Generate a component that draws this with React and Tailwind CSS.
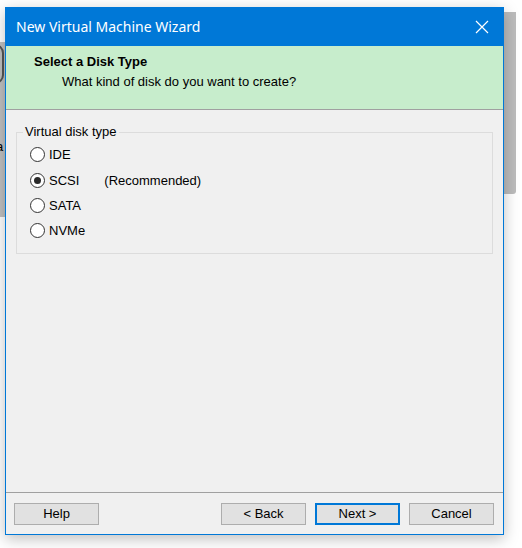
import React from "react";

function Radio({ checked }) {
  return (
    <span className="relative inline-block w-[15px] h-[15px] rounded-full border border-[#333] bg-white shrink-0">
      {checked && <span className="absolute left-[3px] top-[3px] w-[7px] h-[7px] rounded-full bg-[#2a2a2a]" />}
    </span>
  );
}

function Btn({ children, primary }) {
  return (
    <div
      className={
        "w-[85px] h-[22px] flex items-center justify-center bg-[#e1e1e1] text-[13px] text-black " +
        (primary ? "border-2 border-[#0078d7]" : "border border-[#adadad]")
      }
    >
      {children}
    </div>
  );
}

export default function App() {
  const font = { fontFamily: "'Liberation Sans', Arial, sans-serif" };
  return (
    <div className="relative w-[522px] h-[548px] bg-white overflow-hidden" style={font}>
      {/* background window hints */}
      <div className="absolute left-0 top-[42px] w-[6px] h-[175px] bg-[#c0c0c0]" />
      <div className="absolute left-[-14px] top-[44px] w-[18px] h-[40px] rounded-full border-2 border-[#555]" />
      <span className="absolute left-[-4px] top-[139px] text-[13px] text-black leading-[15px]">a</span>
      <div className="absolute left-[504px] top-[12px] w-[12px] h-[182px] bg-[#bcbcbc] rounded-br-[3px]" />
      {/* dialog */}
      <div className="absolute left-[5px] top-[7px] w-[499px] h-[528px] border border-[#0078d7] bg-[#f0f0f0] flex flex-col shadow-[0_4px_14px_rgba(0,0,0,0.25)]">
        <div className="h-[38px] bg-[#0078d7] flex items-center justify-between pl-[10px] pr-[14px] shrink-0">
          <span className="text-white text-[14px] mt-[-2px]" style={{ fontFamily: "'Segoe UI', 'Noto Sans', sans-serif" }}>
            New Virtual Machine Wizard
          </span>
          <svg width="14" height="14" viewBox="0 0 14 14">
            <path d="M1 1 L13 13 M13 1 L1 13" stroke="white" strokeWidth="1.2" />
          </svg>
        </div>
        <div className="h-[64px] bg-[#c7edcc] border-b border-[#a0a0a0] shrink-0 pl-[28px] pt-[8px]">
          <div className="text-[13px] font-bold text-black leading-[15px]">Select a Disk Type</div>
          <div className="text-[13px] text-black leading-[15px] mt-[5px] pl-[28px]">What kind of disk do you want to create?</div>
        </div>
        <div className="flex-1 px-[10px] pt-[22px]">
          <div className="relative border border-[#dcdcdc] h-[122px] pt-[14px] pl-[13px]">
            <span className="absolute left-[6px] top-[-9px] bg-[#f0f0f0] px-[2px] text-[13px] text-black leading-[15px]">
              Virtual disk type
            </span>
            <div className="flex flex-col">
              <div className="flex items-center h-[15px] gap-[4px] text-[13px] text-black">
                <Radio /> <span>IDE</span>
              </div>
              <div className="flex items-center h-[15px] gap-[4px] text-[13px] text-black mt-[11px]">
                <Radio checked /> <span>SCSI</span>
                <span className="ml-[21px]">(Recommended)</span>
              </div>
              <div className="flex items-center h-[15px] gap-[4px] text-[13px] text-black mt-[10px]">
                <Radio /> <span>SATA</span>
              </div>
              <div className="flex items-center h-[15px] gap-[4px] text-[13px] text-black mt-[10px]">
                <Radio /> <span>NVMe</span>
              </div>
            </div>
          </div>
        </div>
        <div className="h-[42px] border-t border-[#a0a0a0] shrink-0 flex items-start pt-[10px] pl-[8px] pr-[9px]">
          <Btn>Help</Btn>
          <div className="flex-1" />
          <div className="flex gap-[9px]">
            <Btn>&lt; Back</Btn>
            <Btn primary>Next &gt;</Btn>
            <Btn>Cancel</Btn>
          </div>
        </div>
      </div>
    </div>
  );
}
